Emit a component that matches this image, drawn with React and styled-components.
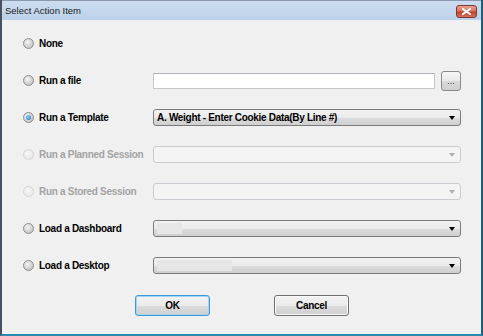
import React from "react";
import styled, { createGlobalStyle, css } from "styled-components";

const Global = createGlobalStyle`
  html, body { margin: 0; padding: 0; background: #f0f0f0; }
  * { box-sizing: border-box; }
`;

const Window = styled.div`
  width: 483px;
  height: 336px;
  display: flex;
  flex-direction: column;
  background: #f0f0f0;
  border-left: 2px solid #4a5060;
  border-right: 2px solid #1f5f78;
  border-bottom: 2px solid #2a8ab0;
  font-family: "Liberation Sans", Arial, sans-serif;
`;

const TitleBar = styled.div`
  height: 20px;
  display: flex;
  align-items: center;
  justify-content: space-between;
  padding: 0 4px 0 3px;
  background: linear-gradient(#cddcef, #bcd2ea);
  border-top: 1px solid #8a99ad;
`;

const Title = styled.span`
  font-size: 9.5px;
  color: #1a1a1a;
`;

const CloseButton = styled.div`
  width: 21px;
  height: 13px;
  margin-top: 2px;
  border: 1px solid #7a3a32;
  border-radius: 3px;
  background: linear-gradient(#e8a493 0%, #d5745f 45%, #c0412a 55%, #d4735b 100%);
  display: flex;
  align-items: center;
  justify-content: center;
`;

const Body = styled.div`
  flex: 1;
  padding: 5px 0 0 21px;
  display: flex;
  flex-direction: column;
`;

const Row = styled.div`
  height: 37px;
  display: grid;
  grid-template-columns: 130px 308px;
  align-items: center;
`;

const Choice = styled.label`
  display: flex;
  align-items: center;
  gap: 5px;
  font-size: 10px;
  font-weight: bold;
  letter-spacing: -0.3px;
  color: ${(p) => (p.disabled ? "#a3a3a3" : "#000")};
`;

const Radio = styled.span`
  width: 11px;
  height: 11px;
  border-radius: 50%;
  flex-shrink: 0;
  border: 1px solid ${(p) => (p.disabled ? "#d4d4d4" : "#8e8e8e")};
  background: ${(p) =>
    p.disabled
      ? "radial-gradient(circle at 40% 40%, #f6f6f6, #e4e4e4)"
      : "radial-gradient(circle at 40% 35%, #f4f4f4, #cfcfcf 60%, #b9b9b9)"};
  display: flex;
  align-items: center;
  justify-content: center;
  ${(p) =>
    p.checked &&
    css`
      &::after {
        content: "";
        width: 5px;
        height: 5px;
        border-radius: 50%;
        background: radial-gradient(circle at 40% 35%, #8fd0f7, #1b6fbf);
      }
    `}
`;

const FileLine = styled.div`
  display: flex;
  align-items: center;
  gap: 6px;
`;

const TextBox = styled.div`
  width: 282px;
  height: 16px;
  background: #fff;
  border: 1px solid #c4c6ca;
  border-top-color: #b0b3b8;
`;

const SmallButton = styled.div`
  width: 20px;
  height: 20px;
  border: 1px solid #8a8a8a;
  border-radius: 3px;
  background: linear-gradient(#f6f6f6 0%, #e9e9e9 50%, #d9d9d9 51%, #d0d0d0 100%);
  font-size: 9px;
  color: #333;
  display: flex;
  align-items: flex-end;
  justify-content: center;
  padding-bottom: 4px;
  line-height: 1;
`;

const Combo = styled.div`
  position: relative;
  height: 17px;
  width: 308px;
  border-radius: 3px;
  display: flex;
  align-items: center;
  padding: 0 3px;
  font-size: 10px;
  font-weight: bold;
  letter-spacing: -0.3px;
  color: #000;
  ${(p) =>
    p.disabled
      ? css`
          border: 1px solid #c9ccd0;
          background: #f4f4f4;
        `
      : css`
          border: 1px solid #7b7b7b;
          background: linear-gradient(#f2f2f2 0%, #ebebeb 50%, #dddddd 51%, #cfcfcf 100%);
        `}
`;

const Selection = styled.span`
  height: 11px;
  background: #e6e6e6;
`;

const Arrow = styled.span`
  position: absolute;
  right: 5px;
  top: 6px;
  width: 0;
  height: 0;
  border-left: 3px solid transparent;
  border-right: 3px solid transparent;
  border-top: 4px solid ${(p) => (p.disabled ? "#b0b0b0" : "#000")};
`;

const ButtonRow = styled.div`
  display: flex;
  margin-top: 11px;
  padding-left: 112px;
  gap: 64px;
`;

const PushButton = styled.div`
  width: 75px;
  height: 21px;
  border-radius: 3px;
  display: flex;
  align-items: center;
  justify-content: center;
  font-size: 10px;
  font-weight: bold;
  letter-spacing: -0.3px;
  color: #000;
  border: 1px solid ${(p) => (p.primary ? "#3d9ad8" : "#707070")};
  background: linear-gradient(#f2f2f2 0%, #ebebeb 50%, #dddddd 51%, #cfcfcf 100%);
  box-shadow: ${(p) => (p.primary ? "inset 0 0 0 1px #9ed6f4" : "inset 0 0 0 1px #fafafa")};
`;

const CloseIcon = () => (
  <svg width="9" height="7" viewBox="0 0 9 7">
    <path d="M1 1 L8 6 M8 1 L1 6" stroke="#fff" strokeWidth="2" strokeLinecap="square" />
  </svg>
);

const DropDown = ({ disabled, children, selection }) => (
  <Combo disabled={disabled}>
    {selection ? <Selection style={{ width: selection }} /> : children}
    <Arrow disabled={disabled} />
  </Combo>
);

const Option = ({ label, checked, disabled }) => (
  <Choice disabled={disabled}>
    <Radio checked={checked} disabled={disabled} />
    {label}
  </Choice>
);

export default function App() {
  return (
    <>
      <Global />
      <Window>
        <TitleBar>
          <Title>Select Action Item</Title>
          <CloseButton>
            <CloseIcon />
          </CloseButton>
        </TitleBar>
        <Body>
          <Row>
            <Option label="None" />
          </Row>
          <Row>
            <Option label="Run a file" />
            <FileLine>
              <TextBox />
              <SmallButton>...</SmallButton>
            </FileLine>
          </Row>
          <Row>
            <Option label="Run a Template" checked />
            <DropDown>A. Weight - Enter Cookie Data(By Line #)</DropDown>
          </Row>
          <Row>
            <Option label="Run a Planned Session" disabled />
            <DropDown disabled />
          </Row>
          <Row>
            <Option label="Run a Stored Session" disabled />
            <DropDown disabled />
          </Row>
          <Row>
            <Option label="Load a Dashboard" />
            <DropDown selection={25} />
          </Row>
          <Row>
            <Option label="Load a Desktop" />
            <DropDown selection={75} />
          </Row>
          <ButtonRow>
            <PushButton primary>OK</PushButton>
            <PushButton>Cancel</PushButton>
          </ButtonRow>
        </Body>
      </Window>
    </>
  );
}
